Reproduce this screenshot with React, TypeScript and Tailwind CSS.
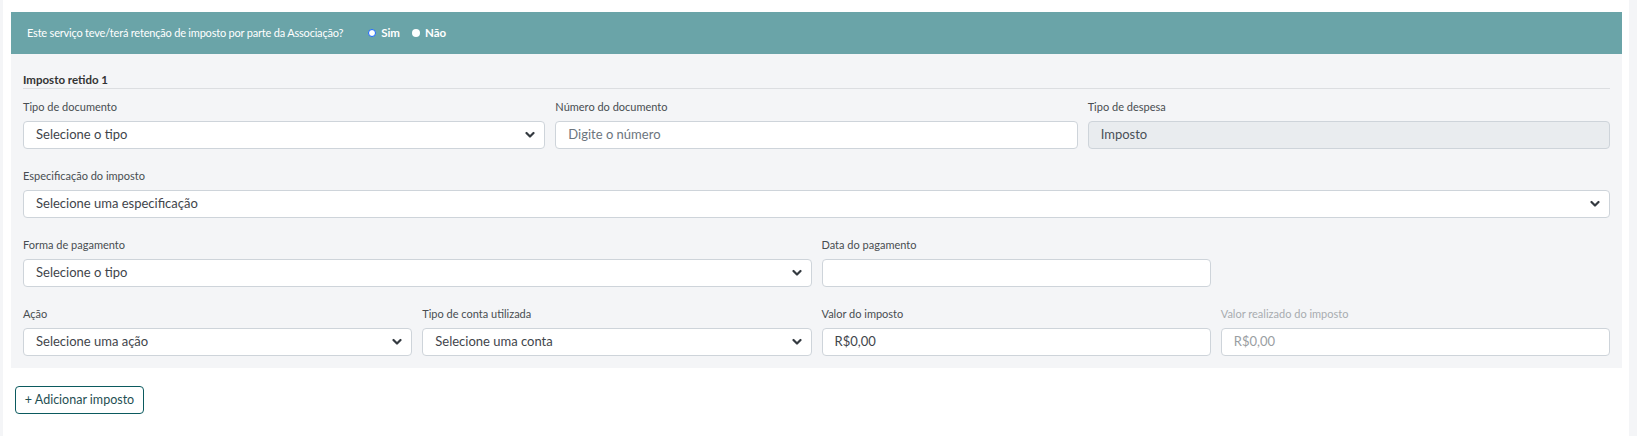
import React from "react";

const font = { fontFamily: "Lato, 'Noto Sans', sans-serif" };

function Chevron() {
  return (
    <svg width="10" height="7" viewBox="0 0 10 7" className="absolute right-[9px] top-1/2 -translate-y-1/2">
      <path d="M1.5 1.5 L5 5 L8.5 1.5" fill="none" stroke="#343a40" strokeWidth="2.2" strokeLinecap="round" strokeLinejoin="round" />
    </svg>
  );
}

function Label({ children, muted }: { children: React.ReactNode; muted?: boolean }) {
  return (
    <div className={`text-[11px] leading-[17px] mb-[6px] ${muted ? "text-[#a8acb0]" : "text-[#484d51]"}`}>{children}</div>
  );
}

function Select({ text }: { text: string }) {
  return (
    <div className="relative h-[28px] bg-white border border-[#ced4da] rounded-[4px] flex items-center pl-[12px] text-[13px] text-[#3f454b]">
      {text}
      <Chevron />
    </div>
  );
}

function Input({ text, placeholder, disabled, muted }: { text?: string; placeholder?: string; disabled?: boolean; muted?: boolean }) {
  return (
    <div
      className={`h-[28px] border border-[#ced4da] rounded-[4px] flex items-center pl-[12px] text-[13px] ${
        disabled ? "bg-[#e9ecef] text-[#495057]" : "bg-white"
      } ${placeholder ? "text-[#6c757d]" : muted ? "text-[#9a9ea2]" : "text-[#3f454b]"}`}
    >
      {text ?? placeholder}
    </div>
  );
}

export default function App() {
  return (
    <div className="w-[1637px] h-[436px] bg-white flex" style={font}>
      <div className="w-[3px] bg-[#f4f5f7]" />
      <div className="flex-1 pl-[8px] pr-[7px] pt-[12px]">
        <div className="h-[42px] bg-[#6aa4a8] flex items-center pl-[16px] text-white text-[11px]">
          <span className="tracking-[-0.2px]">Este serviço teve/terá retenção de imposto por parte da Associação?</span>
          <span className="ml-[25px] flex items-center gap-[5px]">
            <span className="w-[8px] h-[8px] rounded-full bg-white border-[1.5px] border-[#1a66ff]" />
            <span className="font-bold text-[11.5px]">Sim</span>
          </span>
          <span className="ml-[12px] flex items-center gap-[5px]">
            <span className="w-[8px] h-[8px] rounded-full bg-white" />
            <span className="font-bold text-[11.5px]">Não</span>
          </span>
        </div>
        <div className="bg-[#f4f5f7] px-[12px] pt-[17px] pb-[12px]">
          <div className="text-[11.5px] leading-[17px] font-bold text-[#333] border-b border-[#dcdee1]">Imposto retido 1</div>
          <div className="grid grid-cols-3 gap-x-[10px] mt-[9px]">
            <div>
              <Label>Tipo de documento</Label>
              <Select text="Selecione o tipo" />
            </div>
            <div>
              <Label>Número do documento</Label>
              <Input placeholder="Digite o número" />
            </div>
            <div>
              <Label>Tipo de despesa</Label>
              <Input text="Imposto" disabled />
            </div>
          </div>
          <div className="mt-[18px]">
            <Label>Especificação do imposto</Label>
            <Select text="Selecione uma especificação" />
          </div>
          <div className="grid grid-cols-4 gap-x-[10px] mt-[18px]">
            <div className="col-span-2">
              <Label>Forma de pagamento</Label>
              <Select text="Selecione o tipo" />
            </div>
            <div>
              <Label>Data do pagamento</Label>
              <Input text="" />
            </div>
          </div>
          <div className="grid grid-cols-4 gap-x-[10px] mt-[18px]">
            <div>
              <Label>Ação</Label>
              <Select text="Selecione uma ação" />
            </div>
            <div>
              <Label>Tipo de conta utilizada</Label>
              <Select text="Selecione uma conta" />
            </div>
            <div>
              <Label>Valor do imposto</Label>
              <Input text="R$0,00" />
            </div>
            <div>
              <Label muted>Valor realizado do imposto</Label>
              <Input text="R$0,00" muted />
            </div>
          </div>
        </div>
        <div className="mt-[18px] ml-[4px]">
          <button className="h-[28px] w-[129px] border border-[#0b5a5f] rounded-[4px] text-[12.5px] text-[#1f4f53] flex items-center justify-center bg-white">
            + Adicionar imposto
          </button>
        </div>
      </div>
      <div className="w-[8px] bg-[#f4f5f7]" />
    </div>
  );
}
